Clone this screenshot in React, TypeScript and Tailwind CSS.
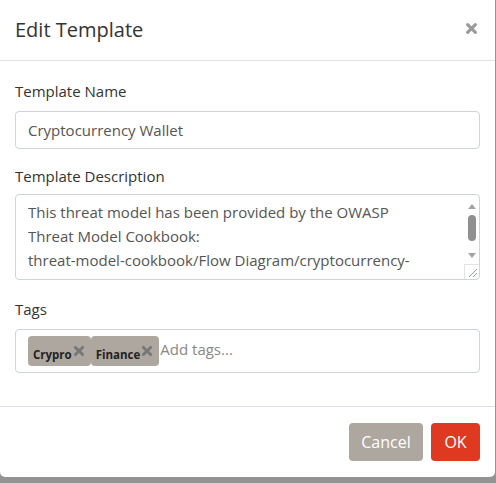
import { useState } from 'react'

// icono X para los tags
function XIcon({ className }: { className?: string }) {
  return (
    <svg viewBox="0 0 10 10" className={className} fill="none" stroke="currentColor" strokeWidth="2.4" strokeLinecap="round">
      <path d="M2 2 L8 8 M8 2 L2 8" />
    </svg>
  )
}

// flecha del scrollbar
function Arrow({ up }: { up?: boolean }) {
  return (
    <svg viewBox="0 0 8 5" className="w-[8px] h-[5px] text-[#a3a3a3]" fill="currentColor">
      <path d={up ? 'M0 5 L4 0 L8 5 Z' : 'M0 0 L8 0 L4 5 Z'} />
    </svg>
  )
}

const description =
  'This threat model has been provided by the OWASP Threat Model Cookbook:\nthreat-model-cookbook/Flow Diagram/cryptocurrency-wallet/cryptocurrency-wallet.json'

// modal de edicion de plantilla
export default function App() {
  const [tags, setTags] = useState(['Crypro', 'Finance'])

  return (
    <div className="min-h-[483px] w-[496px] bg-[#939393] font-['Open_Sans',sans-serif] text-[#333]">
      <div className="w-[495px] h-[477px] bg-white rounded-b-[5px] flex flex-col">
        {/* header */}
        <div className="flex items-center justify-between h-[61px] px-[15px] border-b border-[#dee2e6]">
          <h5 className="text-[20px] text-[#333] -mt-[1px]">Edit Template</h5>
          <button className="text-[#9a9a9a] mr-[2px] -mt-[4px]">
            <XIcon className="w-[13px] h-[13px]" />
          </button>
        </div>

        {/* body */}
        <div className="flex-1 px-[15px] pt-[19px] border-b border-[#dee2e6]">
          <label className="block text-[15px] mb-[8px]">Template Name</label>
          <input
            className="block w-full h-[38px] px-[12px] border border-[#ced4da] rounded-[4px] text-[15px] text-[#555] outline-none"
            defaultValue="Cryptocurrency Wallet"
          />

          <label className="block text-[15px] mt-[16px] mb-[7px]">Template Description</label>
          <div className="flex h-[86px] border border-[#ced4da] rounded-[4px] overflow-hidden">
            <div className="flex-1 min-w-0 pl-[12px] pr-[30px] py-[5px]">
              <textarea
                rows={3}
                className="block w-full h-[72px] p-0 text-[15px] leading-[24px] text-[#555] outline-none resize-none overflow-hidden"
                defaultValue={description}
              />
            </div>
            {/* scrollbar dibujado */}
            <div className="w-[15px] flex flex-col items-center">
              <div className="h-[17px] flex items-end justify-center pb-[3px]">
                <Arrow up />
              </div>
              <div className="w-[8px] h-[26px] mt-[3px] rounded-full bg-[#909090]" />
              <div className="flex-1 flex items-end justify-center pb-[6px]">
                <Arrow />
              </div>
              <div className="w-[15px] h-[15px] border-t border-l border-[#e3e3e3] flex items-end justify-end">
                <svg viewBox="0 0 14 14" className="w-[14px] h-[14px]" stroke="#9a9a9a" strokeWidth="1">
                  <path d="M4 12 L12 4 M8 12 L12 8" />
                </svg>
              </div>
            </div>
          </div>

          <label className="block text-[15px] mt-[18px] mb-[8px]">Tags</label>
          <div className="flex items-center h-[44px] px-[12px] border border-[#ced4da] rounded-[4px]">
            {tags.map((tag) => (
              <span
                key={tag}
                className="flex items-end h-[30px] pl-[5px] pr-[6px] pb-[5px] bg-[#aea79f] rounded-[4px] text-[11.5px] font-bold text-[#222] leading-none"
              >
                {tag}
                <button
                  className="ml-[1px] mb-[4px] text-[#777]"
                  onClick={() => setTags(tags.filter((t) => t !== tag))}
                >
                  <XIcon className="w-[12px] h-[12px]" />
                </button>
              </span>
            ))}
            <input
              className="flex-1 min-w-0 text-[15px] text-[#555] placeholder:text-[#888] outline-none ml-[1px] -mt-[2px]"
              placeholder="Add tags..."
            />
          </div>
        </div>

        {/* footer */}
        <div className="flex justify-end gap-[8px] h-[70px] pt-[16px] px-[15px]">
          <button className="h-[38px] w-[74px] bg-[#aea79f] text-white text-[16px] rounded-[4px]">Cancel</button>
          <button className="h-[38px] w-[49px] bg-[#df3a21] text-white text-[16px] rounded-[4px]">OK</button>
        </div>
      </div>
    </div>
  )
}
